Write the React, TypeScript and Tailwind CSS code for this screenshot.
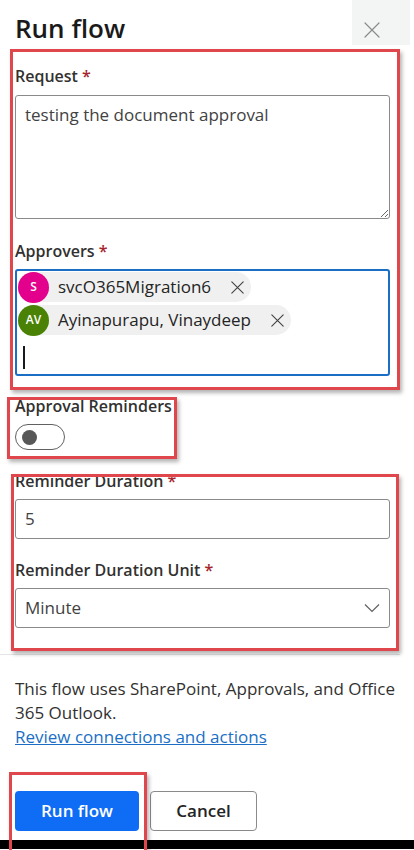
const XIcon = ({ size, color, width }: { size: number; color: string; width: number }) => (
  <svg width={size} height={size} viewBox="0 0 16 16" fill="none">
    <path d="M1 1L15 15M15 1L1 15" stroke={color} strokeWidth={width} strokeLinecap="round" />
  </svg>
);

const Label = ({ text, required }: { text: string; required?: boolean }) => (
  <div className="text-[16px] leading-[22px] font-semibold text-[#323130] whitespace-nowrap">
    {text}
    {required && <span className="text-[#a4262c]"> *</span>}
  </div>
);

const Chip = ({ initials, name, color }: { initials: string; name: string; color: string }) => (
  <div className="self-start flex items-center h-[30px] rounded-full bg-[#f0f0f0] pr-[7px]">
    <div
      className={`w-[31px] h-[31px] rounded-full flex items-center justify-center text-white text-[12px] font-semibold ${color}`}
    >
      {initials}
    </div>
    <span className="ml-[9px] text-[17px] leading-[24px] text-[#242424]">{name}</span>
    <span className="ml-[20px] flex">
      <XIcon size={13} color="#424242" width={1.4} />
    </span>
  </div>
);

const App = () => {
  return (
    <div className="relative w-[414px] h-[850px] overflow-hidden bg-white font-['Open_Sans','Noto_Sans',sans-serif] text-[#242424]">
      <div className="flex flex-col h-full px-[15px]">
        {/* Header */}
        <div className="flex justify-between h-[49px]">
          <h1 className="pt-[10px] text-[26px] leading-[36px] font-semibold text-[#1a1a1a]">Run flow</h1>
          <div className="-mr-[11px] w-[58px] h-[45px] bg-[#f3f5f5] flex items-start pl-[12px] pt-[22px]">
            <XIcon size={16} color="#8a8a8a" width={1.2} />
          </div>
        </div>

        <div className="w-[375px] flex flex-col">
          <div className="mt-[16px]">
            <Label text="Request" required />
          </div>
          <textarea
            readOnly
            value="testing the document approval"
            className="mt-[8px] w-[375px] h-[124px] border border-[#8a8a8a] rounded-[3px] px-[9px] pt-[7px] text-[17px] leading-[24px] text-[#424242] outline-none"
          />

          <div className="mt-[21px]">
            <Label text="Approvers" required />
          </div>
          <div className="mt-[7px] h-[107px] border-2 border-[#1a6fc4] rounded-[3px] p-px flex flex-col gap-[3px]">
            <Chip initials="S" name="svcO365Migration6" color="bg-[#e3008c]" />
            <Chip initials="AV" name="Ayinapurapu, Vinaydeep" color="bg-[#498205]" />
            <div className="ml-[5px] mt-[8px] w-[2px] h-[23px] bg-[#1a1a1a]" />
          </div>

          <div className="mt-[19px]">
            <Label text="Approval Reminders" />
          </div>
          <div className="mt-[7px] w-[50px] h-[26px] rounded-full border border-[#616161] flex items-center pl-[6px]">
            <div className="w-[15px] h-[15px] rounded-full bg-[#585858]" />
          </div>

          <div className="mt-[20px]">
            <Label text="Reminder Duration" required />
          </div>
          <div className="mt-[7px] h-[40px] border border-[#8a8a8a] rounded-[3px] px-[9px] flex items-center text-[17px] text-[#424242]">
            5
          </div>

          <div className="mt-[20px]">
            <Label text="Reminder Duration Unit" required />
          </div>
          <div className="mt-[7px] h-[40px] border border-[#8a8a8a] rounded-[3px] pl-[9px] pr-[9px] flex items-center justify-between text-[17px] text-[#424242]">
            <span>Minute</span>
            <svg width="16" height="10" viewBox="0 0 16 10" fill="none">
              <path d="M1 1.5L8 8.5L15 1.5" stroke="#616161" strokeWidth="1.2" />
            </svg>
          </div>
        </div>

        <div className="-mx-[15px] mt-[26px] w-[400px] h-px bg-[#e6e6e6]" />

        <div className="mt-[22px] text-[17px] leading-[24px] text-[#323130] whitespace-nowrap">
          <p>This flow uses SharePoint, Approvals, and Office</p>
          <p>365 Outlook.</p>
          <a className="block text-[#1a6fc4] underline">Review connections and actions</a>
        </div>

        <div className="mt-[42px] flex gap-[11px]">
          <button className="w-[124px] h-[40px] rounded-[4px] bg-[#0f6cf5] text-white text-[17px] font-semibold">
            Run flow
          </button>
          <button className="w-[107px] h-[40px] rounded-[4px] border border-[#8a8a8a] bg-white text-[#242424] text-[17px] font-semibold">
            Cancel
          </button>
        </div>

        <div className="-mx-[15px] mt-[9px] h-[9px] bg-black" />
      </div>

      {/* Annotation boxes */}
      <div className="pointer-events-none absolute left-[10px] top-[49px] w-[390px] h-[341px] border-[3px] border-[#e0474c] shadow-[2px_3px_4px_rgba(0,0,0,0.3)]" />
      <div className="pointer-events-none absolute left-[7px] top-[397px] w-[170px] h-[62px] border-[3px] border-[#e0474c] shadow-[2px_3px_4px_rgba(0,0,0,0.3)]" />
      <div className="pointer-events-none absolute left-[11px] top-[474px] w-[388px] h-[177px] border-[3px] border-[#e0474c] shadow-[2px_3px_4px_rgba(0,0,0,0.3)]" />
      <div className="pointer-events-none absolute left-[9px] top-[772px] w-[138px] h-[82px] border-[3px] border-[#e0474c] shadow-[2px_3px_4px_rgba(0,0,0,0.3)]" />
    </div>
  );
};

export default App;
